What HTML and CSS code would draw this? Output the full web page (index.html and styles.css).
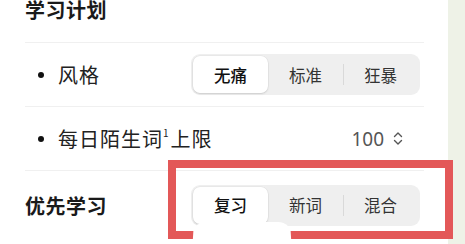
FILE: index.html
```html
<!DOCTYPE html>
<html lang="zh">
<head>
<meta charset="utf-8">
<link rel="stylesheet" href="styles.css">
</head>
<body>
<div class="screen">
  <div class="card">
    <div class="title">学习计划</div>
    <div class="row">
      <div class="label"><span class="bullet"></span>风格</div>
      <div class="seg">
        <div class="opt on">无痛</div>
        <div class="opt">标准</div>
        <div class="opt sep">狂暴</div>
      </div>
    </div>
    <div class="row">
      <div class="label"><span class="bullet"></span>每日陌生词<sup class="sup">1</sup>上限</div>
      <div class="value">100
        <svg class="chev" width="10" height="15" viewBox="0 0 10 15"><path d="M1.5 5.5 L5 2 L8.5 5.5 M1.5 9.5 L5 13 L8.5 9.5" fill="none" stroke="#555" stroke-width="1.4" stroke-linecap="round" stroke-linejoin="round"/></svg>
      </div>
    </div>
    <div class="row last">
      <div class="label strong">优先学习</div>
      <div class="seg">
        <div class="opt on">复习</div>
        <div class="opt">新词</div>
        <div class="opt sep">混合</div>
      </div>
    </div>
  </div>
  <div class="strip"></div>
  <div class="highlight"></div>
  <div class="blob"></div>
</div>
</body>
</html>
```

FILE: styles.css
```css
* { box-sizing: border-box; }
html, body { margin: 0; padding: 0; }
body {
  width: 465px;
  height: 244px;
  overflow: hidden;
  font-family: "Noto Sans CJK SC", "Noto Sans", sans-serif;
  color: #1a1a1a;
  background: #eef2e7;
}
.screen {
  position: relative;
  display: flex;
  width: 465px;
  height: 244px;
  overflow: hidden;
}
.card {
  width: 448px;
  height: 244px;
  background: #fff;
  padding: 0 24px 0 25px;
  display: flex;
  flex-direction: column;
}
.strip {
  flex: 1;
  background: #eef2e7;
}
.title {
  margin-top: -4px;
  font-size: 20px;
  line-height: 28px;
  font-weight: 600;
  padding-bottom: 18px;
  border-bottom: 1px solid #f0f0f0;
  letter-spacing: 0.5px;
}
.row {
  height: 64px;
  display: flex;
  align-items: center;
  justify-content: space-between;
  border-bottom: 1px solid #f0f0f0;
  padding-right: 4px;
}
.row.last {
  height: 68px;
  border-bottom: none;
}
.label {
  display: flex;
  align-items: center;
  font-size: 20px;
  letter-spacing: 1px;
  color: #222;
}
.label.strong {
  font-weight: 600;
  color: #1a1a1a;
  letter-spacing: 0.5px;
}
.bullet {
  width: 6px;
  height: 6px;
  border-radius: 50%;
  background: #111;
  margin: 0 14px 0 13px;
}
.sup {
  font-size: 10px;
  line-height: 1;
  margin: 0 1px 0 0;
  align-self: flex-start;
  position: relative;
  top: 4px;
}
.seg {
  width: 229px;
  height: 41px;
  padding: 2px;
  border-radius: 9px;
  background: #efefef;
  display: flex;
}
.opt {
  flex: 1;
  display: flex;
  align-items: center;
  justify-content: center;
  font-size: 16.5px;
  color: #333;
  position: relative;
}
.opt.on {
  background: #fff;
  border-radius: 7px;
  font-weight: 500;
  color: #111;
  box-shadow: 0 1px 2px rgba(0,0,0,0.12), 0 0 0 0.5px rgba(0,0,0,0.05);
}
.opt.sep::before {
  content: "";
  position: absolute;
  left: 0;
  top: 8px;
  bottom: 8px;
  width: 1px;
  background: #d9d9d9;
}
.value {
  display: flex;
  align-items: center;
  gap: 9px;
  font-family: "Noto Sans", sans-serif;
  font-size: 19px;
  color: #555;
  margin-right: 17px;
}
.chev { display: block; }
.highlight {
  position: absolute;
  left: 168px;
  top: 160px;
  width: 285px;
  height: 79px;
  border: 8px solid #e35858;
}
.blob {
  position: absolute;
  left: 192px;
  top: 222px;
  width: 100px;
  height: 30px;
  background: #fff;
  border-radius: 14px 14px 0 0;
  clip-path: polygon(2% 0, 98% 0, 100% 100%, 0 100%);
}
```
